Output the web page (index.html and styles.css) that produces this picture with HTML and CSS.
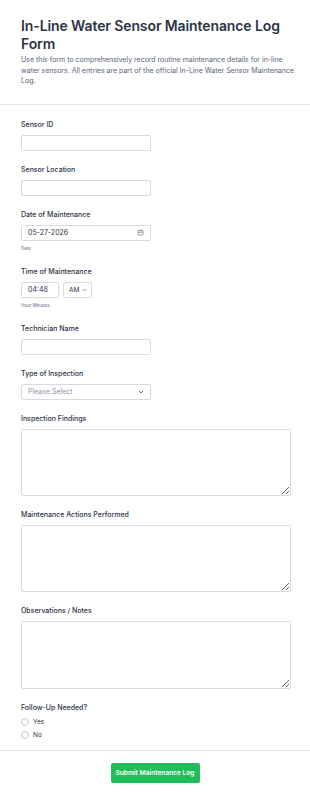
FILE: index.html
```html
<!DOCTYPE html>
<html lang="en">
<head>
    <meta charset="UTF-8">
    <meta name="viewport" content="width=device-width, initial-scale=1.0">
    <title>In-Line Water Sensor Maintenance Log Form</title>
    <link rel="stylesheet" href="styles.css">
</head>
<body>
    <header class="form-header">
        <h1>In-Line Water Sensor Maintenance Log Form</h1>
        <p>Use this form to comprehensively record routine maintenance details for in-line<br>water sensors. All entries are part of the official In-Line Water Sensor Maintenance Log.</p>
    </header>

    <form class="form-body">
        <div class="field">
            <label for="sensorId">Sensor ID</label>
            <input type="text" id="sensorId" class="input short">
        </div>

        <div class="field">
            <label for="sensorLocation">Sensor Location</label>
            <input type="text" id="sensorLocation" class="input short">
        </div>

        <div class="field">
            <label for="date">Date of Maintenance</label>
            <div class="input short with-icon">
                <input type="text" id="date" value="05-27-2026">
                <svg width="7" height="7" viewBox="0 0 14 14" fill="none" stroke="#7d8596" stroke-width="1.6">
                    <rect x="2" y="3" width="10" height="9" rx="2"/>
                    <path d="M2 6.5h10M5 1.5v3M9 1.5v3"/>
                </svg>
            </div>
            <span class="sublabel">Date</span>
        </div>

        <div class="field">
            <label for="hour">Time of Maintenance</label>
            <div class="time-row">
                <input type="text" id="hour" class="input hour" value="04:48">
                <div class="input ampm with-icon">
                    <span>AM</span>
                    <svg width="5" height="4" viewBox="0 0 12 8" fill="none" stroke="#57647e" stroke-width="1.6">
                        <path d="M2 2l4 4 4-4"/>
                    </svg>
                </div>
            </div>
            <span class="sublabel">Hour Minutes</span>
        </div>

        <div class="field">
            <label for="techName">Technician Name</label>
            <input type="text" id="techName" class="input short">
        </div>

        <div class="field">
            <label>Type of Inspection</label>
            <div class="input short with-icon">
                <span class="placeholder">Please Select</span>
                <svg width="6" height="4" viewBox="0 0 12 8" fill="none" stroke="#57647e" stroke-width="1.8">
                    <path d="M2 2l4 4 4-4"/>
                </svg>
            </div>
        </div>

        <div class="field">
            <label for="findings">Inspection Findings</label>
            <textarea id="findings" class="input area"></textarea>
        </div>

        <div class="field">
            <label for="actions">Maintenance Actions Performed</label>
            <textarea id="actions" class="input area"></textarea>
        </div>

        <div class="field">
            <label for="notes">Observations / Notes</label>
            <textarea id="notes" class="input area tall"></textarea>
        </div>

        <div class="field">
            <label>Follow-Up Needed?</label>
            <div class="radios">
                <label class="radio"><input type="radio" name="followup"> Yes</label>
                <label class="radio"><input type="radio" name="followup"> No</label>
            </div>
        </div>
    </form>

    <div class="form-footer">
        <button type="button">Submit Maintenance Log</button>
    </div>
</body>
</html>
```
FILE: styles.css
```css
body {
    font-family: Inter, "Noto Sans", sans-serif;
    margin: 0;
    padding: 0;
    background-color: #fff;
    color: #2c3345;
}
.form-header {
    padding: 17px 4px 17px 21px;
    border-bottom: 1px solid #e6e7ec;
}
.form-header h1 {
    margin: 0 0 2px;
    font-size: 14px;
    line-height: 18px;
    font-weight: 600;
    letter-spacing: -0.1px;
    padding-right: 15px;
}
.form-header p {
    margin: 0;
    font-size: 7px;
    line-height: 10.5px;
    color: #57647e;
}
.form-body {
    padding: 15px 19px 11px 21px;
}
.field {
    margin-bottom: 14px;
}
.field:last-child {
    margin-bottom: 0;
}
.field > label {
    display: block;
    font-size: 7px;
    line-height: 10px;
    font-weight: 500;
    margin-bottom: 5px;
}
.input {
    box-sizing: border-box;
    display: block;
    height: 16px;
    margin: 0;
    padding: 0 6px;
    border: 1px solid #d8dae3;
    border-radius: 2px;
    background: #fff;
    font-family: inherit;
    font-size: 7px;
    color: #2c3345;
    outline: none;
}
.short {
    width: 130px;
}
.with-icon {
    display: flex;
    align-items: center;
    justify-content: space-between;
}
.with-icon input {
    border: 0;
    padding: 0;
    width: 100px;
    font-family: inherit;
    font-size: 7px;
    color: #2c3345;
    outline: none;
}
.placeholder {
    color: #8d94a8;
}
.sublabel {
    display: block;
    margin-top: 4px;
    font-size: 4.5px;
    line-height: 8px;
    color: #57647e;
}
.time-row {
    display: flex;
    gap: 4px;
}
.hour {
    width: 38px;
}
.ampm {
    width: 29px;
    padding: 0 4px 0 5px;
    font-size: 6.6px;
}
.area {
    width: 100%;
    height: 67px;
    padding: 4px 6px;
}
.area.tall {
    height: 68px;
}
.radios {
    display: flex;
    flex-direction: column;
    gap: 5px;
}
.radio {
    display: flex;
    align-items: center;
    gap: 4px;
    font-size: 6.5px;
    line-height: 8px;
    color: #2c3345;
}
.radio input {
    appearance: none;
    margin: 0;
    width: 8px;
    height: 8px;
    border: 1px solid #c3c7d3;
    border-radius: 50%;
    background: #fff;
}
.form-footer {
    border-top: 1px solid #e6e7ec;
    padding: 12px 0 17px;
    display: flex;
    justify-content: center;
}
.form-footer button {
    width: 89px;
    height: 20px;
    padding: 0;
    border: 0;
    border-radius: 2px;
    background-color: #1fbe5a;
    color: #fff;
    font-family: inherit;
    font-size: 6.6px;
    font-weight: 600;
    white-space: nowrap;
    cursor: pointer;
}
```
